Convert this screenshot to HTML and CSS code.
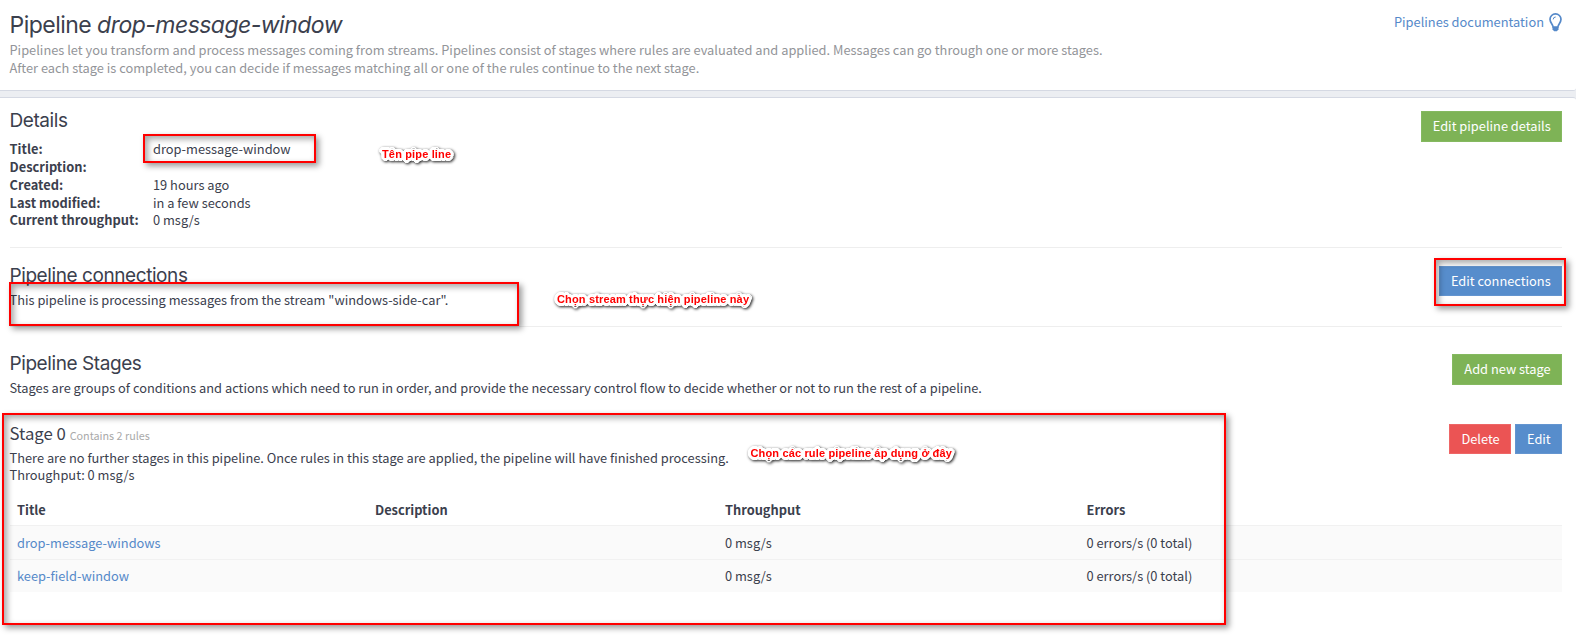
FILE: index.html
```html
<!DOCTYPE html>
<html lang="en">
<head>
<meta charset="utf-8">
<title>Pipeline drop-message-window</title>
<link rel="stylesheet" href="styles.css">
</head>
<body>
<header class="panel page-header">
  <div class="intro">
    <h1>Pipeline <em>drop-message-window</em></h1>
    <p>Pipelines let you transform and process messages coming from streams. Pipelines consist of stages where rules are evaluated and applied. Messages can go through one or more stages.<br>After each stage is completed, you can decide if messages matching all or one of the rules continue to the next stage.</p>
  </div>
  <a class="doc-link" href="#"><span>Pipelines documentation</span>
    <svg class="bulb" viewBox="0 0 13 19" width="13" height="19"><path d="M4.200 14.200C4 11.200 1 9.800 1 6.300a5.500 5.400 0 0 1 11 0C12 9.800 9 11.200 8.800 14.200z" fill="none" stroke="currentColor" stroke-width="1.700"/><path d="M4.200 6.400A2.500 2.500 0 0 1 6.700 4" fill="none" stroke="currentColor" stroke-width="1"/><path d="M3.500 14.300h6v2.300L7.800 18.200H5.200l-1.700-1.600z" fill="currentColor"/></svg>
  </a>
</header>
<main class="panel content">
  <section class="details">
    <div>
      <h2>Details</h2>
      <dl>
        <dt>Title:</dt><dd>drop-message-window</dd>
        <dt>Description:</dt><dd></dd>
        <dt>Created:</dt><dd>19 hours ago</dd>
        <dt>Last modified:</dt><dd>in a few seconds</dd>
        <dt>Current throughput:</dt><dd>0 msg/s</dd>
      </dl>
    </div>
    <button class="btn success">Edit pipeline details</button>
  </section>
  <section class="connections">
    <div>
      <h2>Pipeline connections</h2>
      <p>This pipeline is processing messages from the stream "windows-side-car".</p>
    </div>
    <button class="btn info">Edit connections</button>
  </section>
  <section class="stages">
    <div>
      <h2>Pipeline Stages</h2>
      <p>Stages are groups of conditions and actions which need to run in order, and provide the necessary control flow to decide whether or not to run the rest of a pipeline.</p>
    </div>
    <button class="btn success">Add new stage</button>
  </section>
  <section class="stage">
    <div>
      <h3>Stage 0 <small>Contains 2 rules</small></h3>
      <p>There are no further stages in this pipeline. Once rules in this stage are applied, the pipeline will have finished processing.<br>Throughput: 0 msg/s</p>
    </div>
    <div class="actions"><button class="btn danger">Delete</button><button class="btn info">Edit</button></div>
  </section>
  <div class="rules">
    <div class="row head"><span>Title</span><span>Description</span><span>Throughput</span><span>Errors</span></div>
    <div class="row"><a href="#">drop-message-windows</a><span></span><span>0 msg/s</span><span>0 errors/s (0 total)</span></div>
    <div class="row"><a href="#">keep-field-window</a><span></span><span>0 msg/s</span><span>0 errors/s (0 total)</span></div>
  </div>
</main>
<div class="mark mark-title"></div>
<div class="mark mark-connection"></div>
<div class="mark mark-edit"></div>
<div class="mark mark-stage"></div>
<div class="note note-title">Tên pipe line</div>
<div class="note note-connection">Chọn stream thực hiện pipeline này</div>
<div class="note note-stage">Chọn các rule pipeline áp dụng ở đây</div>
</body>
</html>
```
FILE: styles.css
```css
* { box-sizing: border-box; }
body {
  margin: 0;
  height: 641px;
  overflow: hidden;
  position: relative;
  background: #eceef2;
  color: #3b404d;
  font: 12.83px/17.85px "Noto Sans CJK SC", sans-serif;
}
h1, h2, h3, p, dl, dd { margin: 0; }
a { color: #5589c9; text-decoration: none; }
.panel { background: #fff; border: solid #d5d9e3; border-width: 0 0 1px; padding: 0 14px 0 9.5px; }
.page-header { height: 91px; display: flex; justify-content: space-between; border-bottom-right-radius: 3px; }
.page-header p { color: #939599; }
h1, h2 { font-family: Inter, sans-serif; font-weight: 400; }
h1 { font-size: 23px; line-height: 30px; margin: 10px 0 1px; letter-spacing: -0.53px; }
.doc-link { display: flex; gap: 5px; padding-top: 13px; }
.content { height: 544px; margin-top: 6px; border-width: 1px 0 0; border-top-right-radius: 3px; }
section { display: flex; justify-content: space-between; align-items: flex-start; }
h2 { font-size: 19px; line-height: 24px; letter-spacing: -0.42px; }
.details { height: 150px; border-bottom: 1px solid #eee; padding-top: 11px; }
.details .btn { margin-top: 2px; padding-bottom: 2px; }
.details dl { display: grid; grid-template-columns: 143.5px auto; grid-auto-rows: 17.85px; margin-top: 7px; }
dt { font-weight: 700; letter-spacing: 0.03px; }
.connections { height: 79px; border-bottom: 1px solid #eee; padding-top: 16px; }
.connections .btn { margin-top: 2px; height: 30px; }
.connections p, .stages p { margin-top: 3px; }
.stages { height: 85px; padding-top: 25px; }
.stages .btn { margin-top: 2px; padding-bottom: 2px; }
.stage { height: 80px; padding-top: 10px; }
h3 { font-size: 16.75px; line-height: 23px; font-weight: 400; }
.stage p { margin-top: 2px; line-height: 17px; }
small { font-size: 10.8px; color: #aaa; }
.actions { display: flex; gap: 4px; margin-top: 2px; }
.actions .btn { height: 30px; }
.btn { height: 31px; border: 1px solid; padding: 0 10.3px 0 11px; color: #fff; font: inherit; white-space: nowrap; }
.success { background: #7eb356; border-color: #85b960; }
.info { background: #578dcc; border-color: #6495d0; }
.danger { background: #eb5454; border-color: #ee6666; }
.row { display: grid; grid-template-columns: 358px 350px 361.5px auto; height: 34px; align-items: center; padding-left: 7.5px; border-top: 1px solid #f1f1f1; background: #fafafa; }
.row:last-child { height: 33px; }
.row.head { background: none; border: 0; font-weight: 700; height: 33px; padding-top: 2px; }
.mark { position: absolute; border: 2px solid #f00; box-shadow: 3px 3px 6px rgba(0,0,0,.4), inset 3px 3px 6px rgba(0,0,0,.35); }
.mark-title { left: 143px; top: 134px; width: 173px; height: 29px; }
.mark-connection { left: 9px; top: 282px; width: 510px; height: 44px; }
.mark-edit { left: 1434px; top: 258px; width: 132px; height: 48px; }
.mark-stage { left: 2px; top: 413px; width: 1224px; height: 212px; }
.note {
  position: absolute;
  color: #f00;
  font: 700 11px/14px "Liberation Sans", sans-serif;
  letter-spacing: 0.15px;
  white-space: nowrap;
  text-shadow:
    3px 0 #fff, -3px 0 #fff, 0 3px #fff, 0 -3px #fff,
    2px 2px #fff, -2px 2px #fff, 2px -2px #fff, -2px -2px #fff,
    3px 1px #fff, -3px 1px #fff, 3px -1px #fff, -3px -1px #fff,
    1px 3px #fff, -1px 3px #fff, 1px -3px #fff, -1px -3px #fff,
    1px 1px #fff, -1px -1px #fff, 1px -1px #fff, -1px 1px #fff;
  filter: drop-shadow(1px 1px 1.500px rgba(0,0,0,.9));
}
.note-title { left: 382px; top: 147px; }
.note-connection { left: 557px; top: 292px; }
.note-stage { left: 750.5px; top: 446px; }
```
